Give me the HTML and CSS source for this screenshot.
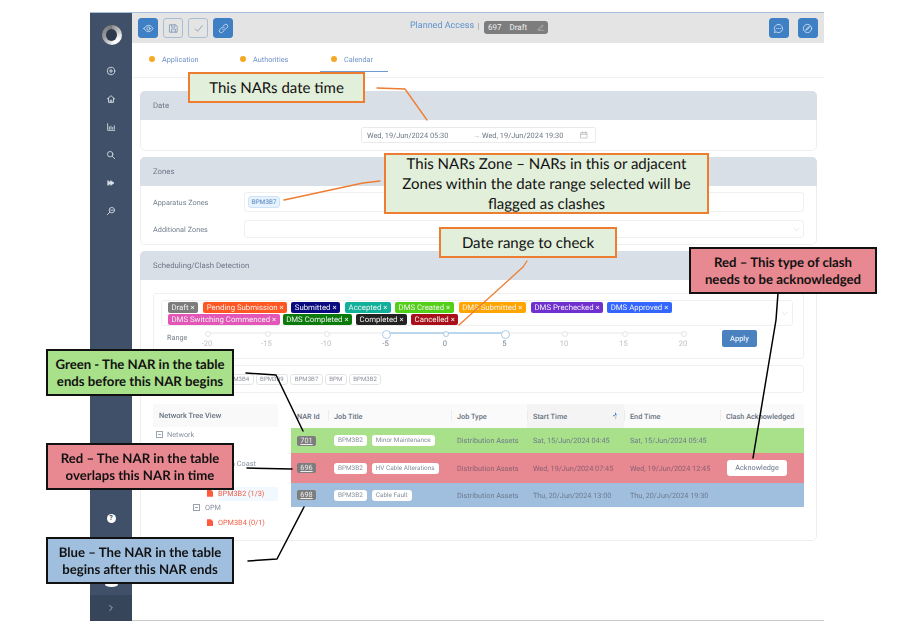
FILE: index.html
```html
<!doctype html>
<html>
<head>
<meta charset="UTF-8">
<title>Planned Access</title>
<link rel="stylesheet" href="styles.css">
</head>

<body>
<div class="app">
	<div class="side">
		<div class="logo"></div>
		<ul class="nav">
			<li><svg viewBox="0 0 24 24"><circle cx="12" cy="12" r="9"/><path d="M12 8v8M8 12h8"/></svg></li>
			<li><svg viewBox="0 0 24 24"><path d="M3 12 12 4l9 8M6 10v10h12V10M10 20v-5h4v5"/></svg></li>
			<li><svg viewBox="0 0 24 24"><path d="M4 4v16h17M8 17v-5M12 17v-7M16 17v-4M20 17V9"/></svg></li>
			<li><svg viewBox="0 0 24 24"><circle cx="10" cy="10" r="6.5"/><path d="m15 15 6 6"/></svg></li>
			<li><svg viewBox="0 0 24 24" class="solid"><path d="M5 7l7 5-7 5zM12 7l7 5-7 5z"/></svg></li>
			<li><svg viewBox="0 0 24 24"><circle cx="14" cy="10" r="6.5"/><path d="m9 15-6 6M11 10h6"/></svg></li>
		</ul>
		<div class="help">?</div>
		<div class="blob"></div>
		<div class="fold"><svg viewBox="0 0 24 24"><path d="m8 4 8 8-8 8"/></svg></div>
	</div>
	<div class="main">
		<div class="bar">
			<div class="btns">
				<a class="btn blue"><svg viewBox="0 0 24 24"><path d="M2 12s4-7 10-7 10 7 10 7-4 7-10 7-10-7-10-7z"/><circle cx="12" cy="12" r="3.5"/></svg></a>
				<a class="btn"><svg viewBox="0 0 24 24"><path d="M4 4h13l3 3v13H4zM8 4v5h7V4M8 20v-7h8v7"/></svg></a>
				<a class="btn"><svg viewBox="0 0 24 24"><path d="m5 13 5 5L20 6"/></svg></a>
				<a class="btn blue"><svg viewBox="0 0 24 24"><path d="M10 14a4 4 0 0 0 6 0l4-4a4 4 0 0 0-6-6l-2 2M14 10a4 4 0 0 0-6 0l-4 4a4 4 0 0 0 6 6l2-2"/></svg></a>
			</div>
			<div class="title">
				<span class="name">Planned Access</span>
				<span class="pipe"></span>
				<span class="badge"><b>697</b><b>Draft</b><svg viewBox="0 0 24 24"><path d="m5 17 11-11 3 3-11 11H4zM4 22h17"/></svg></span>
			</div>
			<div class="btns">
				<a class="btn blue"><svg viewBox="0 0 24 24"><path d="M12 3a9 9 0 1 1-5 16.500L3 21l1.500-4A9 9 0 0 1 12 3zM8 12h1M12 12h1M16 12h1"/></svg></a>
				<a class="btn blue"><svg viewBox="0 0 24 24"><circle cx="12" cy="12" r="9"/><path d="m16 8-5 3-3 5 5-3z"/></svg></a>
			</div>
		</div>
		<div class="tabs">
			<a class="tab"><i></i>Application</a>
			<a class="tab"><i></i>Authorities</a>
			<a class="tab on"><i></i>Calendar</a>
		</div>
		<div class="body">
			<div class="panel date">
				<h3>Date</h3>
				<div class="inner">
					<div class="picker">
						<span class="from">Wed, 19/Jun/2024 05:30</span>
						<span class="arrow">→</span>
						<span class="to">Wed, 19/Jun/2024 19:30</span>
						<svg viewBox="0 0 24 24"><path d="M3 5h18v16H3zM3 10h18M8 2v5M16 2v5"/></svg>
					</div>
				</div>
			</div>
			<div class="panel zones">
				<h3>Zones</h3>
				<div class="inner">
					<div class="row">
						<label>Apparatus Zones</label>
						<div class="field"><span class="zone">BPM3B7</span></div>
					</div>
					<div class="row">
						<label>Additional Zones</label>
						<div class="field low"><svg class="chev" viewBox="0 0 24 24"><path d="m4 8 8 8 8-8"/></svg></div>
					</div>
				</div>
			</div>
			<div class="panel sched">
				<h3>Scheduling/Clash Detection</h3>
				<div class="inner">
					<div class="filter">
						<div class="select">
							<div class="tags">
								<span class="tag t1">Draft ×</span>
								<span class="tag t2">Pending Submission ×</span>
								<span class="tag t3">Submitted ×</span>
								<span class="tag t4">Accepted ×</span>
								<span class="tag t5">DMS Created ×</span>
								<span class="tag t6">DMS Submitted ×</span>
								<span class="tag t7">DMS Prechecked ×</span>
								<span class="tag t8">DMS Approved ×</span>
								<span class="tag t9">DMS Switching Commenced ×</span>
								<span class="tag t10">DMS Completed ×</span>
								<span class="tag t11">Completed ×</span>
								<span class="tag t12">Cancelled ×</span>
							</div>
							<svg class="chev" viewBox="0 0 24 24"><path d="m4 8 8 8 8-8"/></svg>
						</div>
						<div class="range">
							<label>Range</label>
							<div class="slider">
								<div class="track"></div>
								<div class="marks">
									<span>-20</span>
									<span>-15</span>
									<span>-10</span>
									<span class="end">-5</span>
									<span class="mid">0</span>
									<span class="end">5</span>
									<span>10</span>
									<span>15</span>
									<span>20</span>
								</div>
							</div>
							<a class="apply">Apply</a>
						</div>
					</div>
					<div class="chips">
						<span>BPM3B4</span>
						<span>BPM3B9</span>
						<span>BPM3B7</span>
						<span>BPM</span>
						<span>BPM3B2</span>
					</div>
					<div class="split">
						<div class="tree">
							<h4>Network Tree View</h4>
							<div class="node"><i class="box"></i>Network</div>
							<div class="node"></div>
							<div class="node coast">a Coast</div>
							<div class="node"></div>
							<div class="node leaf cur"><i class="file"></i>BPM3B2 (1/3)</div>
							<div class="node opm"><i class="box"></i>OPM</div>
							<div class="node leaf"><i class="file"></i>OPM3B4 (0/1)</div>
						</div>
						<table class="nars">
							<thead>
								<tr>
									<th class="c1">NAR Id</th>
									<th class="c2">Job Title</th>
									<th class="c3">Job Type</th>
									<th class="c4">Start Time<i class="sort"></i></th>
									<th class="c5">End Time</th>
									<th class="c6">Clash Acknowledged</th>
								</tr>
							</thead>
							<tbody>
								<tr class="green">
									<td><span class="id">701</span></td>
									<td><span class="pill">BPM3B2</span><span class="pill">Minor Maintenance</span></td>
									<td>Distribution Assets</td>
									<td>Sat, 15/Jun/2024 04:45</td>
									<td>Sat, 15/Jun/2024 05:45</td>
									<td></td>
								</tr>
								<tr class="red">
									<td><span class="id">696</span></td>
									<td><span class="pill">BPM3B2</span><span class="pill">HV Cable Alterations</span></td>
									<td>Distribution Assets</td>
									<td>Wed, 19/Jun/2024 07:45</td>
									<td>Wed, 19/Jun/2024 12:45</td>
									<td><a class="ack">Acknowledge</a></td>
								</tr>
								<tr class="blue">
									<td><span class="id">698</span></td>
									<td><span class="pill">BPM3B2</span><span class="pill">Cable Fault</span></td>
									<td>Distribution Assets</td>
									<td>Thu, 20/Jun/2024 13:00</td>
									<td>Thu, 20/Jun/2024 19:30</td>
									<td></td>
								</tr>
							</tbody>
						</table>
					</div>
				</div>
			</div>
		</div>
	</div>
</div>

<svg class="lines" viewBox="0 0 906 627">
	<g class="orange">
		<path d="M377 88 405 89 427 120"/>
		<path d="M284 200 363 183 380 181"/>
		<path d="M459 325 523 267 527 261"/>
	</g>
	<g class="black">
		<path d="M778 293 776 320 753 458"/>
		<path d="M246 373 276 375 303 431"/>
		<path d="M247 468 292 469"/>
		<path d="M248 561 277 559 304 507"/>
	</g>
</svg>

<div class="note n1">This NARs date time</div>
<div class="note n2">This NARs Zone – NARs in this or adjacent<br>Zones within the date range selected will be<br>flagged as clashes</div>
<div class="note n3">Date range to check</div>
<div class="key n4">Red – This type of clash<br>needs to be acknowledged</div>
<div class="key n5">Green - The NAR in the table<br>ends before this NAR begins</div>
<div class="key n6">Red – The NAR in the table<br>overlaps this NAR in time</div>
<div class="key n7">Blue – The NAR in the table<br>begins after this NAR ends</div>
</body>
</html>
```

FILE: styles.css
```css
*{ margin:0; padding:0; box-sizing:border-box; list-style:none; }
html,body{ width:906px; height:627px; overflow:hidden; background:#fff; }
body{ padding:12px 0 0 90px; font-family:Roboto,"Liberation Sans",sans-serif; font-size:7.3px; color:#68758a; position:relative; text-rendering:geometricPrecision; }
svg{ fill:none; stroke:currentColor; stroke-width:2; stroke-linecap:round; stroke-linejoin:round; }

.app{ width:734px; height:609px; display:flex; border-top:1px solid #a6bfdb; filter:blur(.35px); }

.side{ width:42px; background:#3f5068; color:#dfe4ea; display:flex; flex-direction:column; align-items:center; flex:none; }
.logo{ width:20px; height:20px; margin:12px 0 0 2px; border-radius:50%; background:conic-gradient(#8d8d8d,#f4f4f4 30%,#fff 45%,#9a9a9a 70%,#777); position:relative; }
.logo:after{ content:""; position:absolute; left:4px; top:4px; width:11px; height:12px; border-radius:50%; background:#2c3a4e; }
.nav{ margin-top:21px; display:flex; flex-direction:column; gap:18px; }
.nav li{ width:10px; height:10px; }
.nav svg{ width:10px; height:10px; display:block; }
.nav .solid{ fill:currentColor; }
.help{ width:9px; height:9px; margin-top:298px; border-radius:50%; background:#fff; color:#3f5068; font-size:7px; font-weight:700; line-height:9px; text-align:center; }
.blob{ width:13px; height:5px; margin-top:59px; border-radius:50%; background:#fff; }
.fold{ margin-top:auto; width:100%; height:26px; background:#36455a; display:flex; align-items:center; justify-content:center; }
.fold svg{ width:8px; height:8px; }

.main{ flex:1; min-width:0; border-bottom:1px solid #c9c9c9; }
.bar{ height:30px; padding:0 6px; background:#e4e4e4; display:flex; align-items:center; justify-content:space-between; }
.btns{ display:flex; gap:5px; }
.btns:last-child{ gap:9px; }
.btn{ width:20px; height:20px; border:1px solid #a9bdd3; border-radius:3px; color:#6f8db0; display:flex; align-items:center; justify-content:center; }
.btn svg{ width:11px; height:11px; stroke-width:1.6; }
.btn.blue{ background:#3f80c4; border-color:#3f80c4; color:#e6eff8; }
.title{ display:flex; align-items:center; gap:4px; position:relative; left:-22px; top:-1px; }
.name{ color:#5f93cc; font-size:9px; position:relative; top:-1px; }
.pipe{ width:1px; height:7px; background:#b5b5b5; position:relative; top:-1px; }
.badge{ width:64px; height:13px; margin-left:1px; padding:0 4px; border-radius:3px; background:#7d7d7d; color:#f2f2f2; font-size:8px; display:flex; align-items:center; gap:8px; }
.badge b{ font-weight:400; }
.badge svg{ width:8px; height:8px; flex:none; margin-left:2px; stroke-width:1.500; color:#ccc; }

.tabs{ height:35px; border-bottom:1px solid #f0f0f0; display:flex; }
.tab{ position:relative; width:91px; padding:10px 0 0 30px; color:#6e93c6; line-height:14px; }
.tab i{ position:absolute; left:17px; top:13px; width:6px; height:6px; border-radius:50%; background:#f7a823; }
.tab.on{ width:68px; margin-left:6px; padding-left:24px; border-bottom:1px solid #6e9ad0; height:29px; }
.tab.on i{ left:11px; }

.body{ padding:13px 7px 0 8px; }
.panel{ border:1px solid #eee; border-radius:5px; margin-bottom:6px; }
.panel h3{ height:29px; margin:-1px -1px 0; padding-left:13px; background:#d9dfe7; border-radius:5px 5px 0 0; color:#6d7787; font-size:7.800px; font-weight:400; line-height:29px; }
.panel.date{ height:60px; }
.panel.zones{ height:88px; }
.panel.sched{ height:290px; }
.inner{ padding:0 12px; }

.picker{ width:235px; height:16px; margin:7px 0 0 208px; padding:0 5px; border:1px solid #eaeaea; border-radius:2px; display:flex; align-items:center; color:#6e7785; font-size:7.400px; }
.from{ width:106px; }
.arrow{ width:9px; color:#aaa; }
.to{ width:92px; }
.picker svg{ width:8px; height:8px; margin-left:6px; stroke-width:1.500; color:#999; }

.row{ display:flex; align-items:center; margin-top:6px; }
.row+.row{ margin-top:8px; }
.row label{ width:91px; flex:none; color:#76818f; }
.field{ flex:1; height:20px; padding:0 3px; border:1px solid #f0f0f0; border-radius:3px; display:flex; align-items:center; position:relative; }
.field.low{ height:18px; justify-content:flex-end; }
.zone{ width:32px; height:12px; border:1px solid #cfe3f8; border-radius:3px; background:#e6f2fd; color:#4e80c2; font-size:6.400px; line-height:10px; text-align:center; }
.chev{ width:7px; height:7px; color:#c5c5c5; flex:none; stroke-width:1.500; }

.sched .inner{ padding-top:13px; }
.filter{ height:66px; border:1px solid #f0f0f0; border-radius:3px; padding:6px 12px 0 7px; }
.select{ height:26px; width:632px; border:1px solid #f0f0f0; border-radius:3px; padding:0 4px 0 6px; display:flex; align-items:center; justify-content:space-between; }
.tags{ width:600px; display:flex; flex-wrap:wrap; gap:1px 4px; }
.tag{ height:11px; padding:0 3.500px; border-radius:2px; color:#f2f2f2; font-size:7.800px; line-height:11px; white-space:nowrap; }
.t1{ background:#7d7d7d; }
.t2{ background:#ff5722; margin-left:1px; }
.t3{ background:#0a0a80; }
.t4{ background:#10b09a; margin-left:1px; }
.t5{ background:#52d017; }
.t6{ background:#ffa500; margin-left:1px; }
.t7{ background:#7030d0; margin-left:1px; }
.t8{ background:#3366ff; }
.t9{ background:#e455b8; }
.t10{ background:#0a7a0a; margin-left:-1px; }
.t11{ background:#222; }
.t12{ background:#a80f1a; }
.range{ display:flex; align-items:flex-start; margin-top:3px; }
.range label{ width:40px; flex:none; margin:4px 0 0 6px; color:#78808c; }
.slider{ width:476px; flex:none; position:relative; padding-top:3px; }
.track{ height:2px; background:#f3f3f3; }
.marks{ display:flex; justify-content:space-between; position:absolute; left:0; right:0; top:0; }
.marks span{ width:0; padding-top:10px; display:flex; justify-content:center; color:#c2c2c2; font-size:7.600px; position:relative; white-space:nowrap; }
.marks span:before{ content:""; position:absolute; left:-2px; top:2px; width:4px; height:4px; border:1px solid #e4e4e4; border-radius:50%; background:#fff; }
.marks .end,.marks .mid{ color:#7c8592; }
.marks .mid:before{ border-color:#a9cbe8; }
.marks .end:before{ left:-3.500px; top:.5px; width:7px; height:7px; border-color:#a9cbe8; }
.marks .end:nth-child(4):after{ content:""; position:absolute; left:3px; top:3px; width:113px; height:2px; background:#bcd6ec; }
.apply{ width:35px; height:17px; margin:1px 0 0 39px; border-radius:2px; background:#4a82c0; color:#eaf1f9; font-size:7.500px; font-weight:500; line-height:17px; text-align:center; }

.chips{ height:28px; margin-top:6px; padding:0 0 0 67px; border:1px solid #f0f0f0; border-radius:3px; display:flex; align-items:center; gap:2px; }
.chips span{ height:11px; padding:0 3.500px; border:1px solid #e4e4e4; border-radius:3px; color:#8a919c; font-size:6.100px; line-height:9px; }

.split{ display:flex; margin-top:11px; }
.tree{ width:125px; flex:none; margin-right:13px; }
.tree h4{ height:23px; margin-bottom:1px; padding-left:6px; background:#f9f9f9; color:#66707f; font-size:7.400px; font-weight:500; line-height:23px; }
.node{ position:relative; height:14.700px; color:#8a93a0; line-height:14px; padding-left:14px; }
.box{ position:absolute; left:3px; top:3px; width:7px; height:7px; border:1px solid #9ba3ad; }
.box:after{ content:""; position:absolute; left:1px; top:2px; width:3px; height:1px; background:#9ba3ad; }
.coast{ padding-left:78px; }
.leaf{ margin-left:65px; padding-left:0; color:#f2604c; width:60px; }
.leaf.cur{ background:#f2f9fe; }
.leaf .file{ position:absolute; left:-11px; top:3px; width:6px; height:7px; background:#ff5a3c; clip-path:polygon(0 0,65% 0,100% 30%,100% 100%,0 100%); }
.opm{ padding-left:52px; }
.opm .box{ left:40px; }

.nars{ width:513px; border-collapse:collapse; table-layout:fixed; align-self:flex-start; }
.nars th{ height:24px; padding-left:6px; background:#fafafa; color:#66707f; font-weight:500; text-align:left; white-space:nowrap; position:relative; }
.nars th+th:before{ content:""; position:absolute; left:0; top:6px; height:11px; width:1px; background:#ececec; }
.c1{ width:37px; }
.c2{ width:123px; }
.c3{ width:76px; }
.c4{ width:97px; }
.c5{ width:96px; }
.c6{ width:84px; }
th.c4{ background:#f4f4f4; }
.sort{ position:absolute; right:7px; top:8px; width:4px; height:8px; background:linear-gradient(#3f80c4 50%,#c5c5c5 50%); clip-path:polygon(50% 0,100% 40%,0 40%,0 55%,100% 55%,50% 100%); }
.nars td{ padding-left:6px; color:#6e7a8c; white-space:nowrap; }
.nars .green td{ height:25px; background:#a9e08a; }
.nars .red td{ height:30px; background:#e88890; color:#8a6072; }
.nars .blue td{ height:24px; background:#a0bfdf; }
.id{ display:block; width:19px; height:10px; border-radius:2px; background:#7d7d7d; color:#eee; line-height:10px; text-align:center; text-decoration:underline; }
.pill{ display:inline-block; height:11px; margin-right:5px; padding:0 4px; border-radius:3px; background:#fff; color:#868e99; font-size:6.400px; line-height:11px; }
.ack{ display:block; width:60px; height:16px; margin-left:1px; border-radius:3px; background:#fff; color:#6d7a8e; line-height:16px; text-align:center; }

.lines{ position:absolute; left:0; top:0; width:906px; height:627px; fill:none; stroke-linecap:round; stroke-linejoin:round; }
.orange{ stroke:#ed7d31; stroke-width:1.300; }
.black{ stroke:#000; stroke-width:1.500; }

.note,.key{ position:absolute; display:flex; align-items:center; justify-content:center; text-align:center; font-family:Lato,"Open Sans",sans-serif; color:#111; line-height:20px; white-space:nowrap; }
.note{ border:2px solid #ed7d31; background:#e2efda; font-size:15px; }
.key{ width:188px; height:47px; border:2px solid #111; font-size:13.200px; font-weight:700; line-height:17px; }
.n1{ left:188px; top:72px; width:177px; height:31px; }
.n2{ left:384px; top:153px; width:325px; height:61px; }
.n3{ left:439px; top:227px; width:178px; height:31px; }
.n4{ left:689px; top:247px; background:#e88890; }
.n5{ left:46px; top:349px; background:#a9e08a; }
.n6{ left:46px; top:443px; background:#e88890; }
.n7{ left:46px; top:537px; background:#a0bfdf; }
```
